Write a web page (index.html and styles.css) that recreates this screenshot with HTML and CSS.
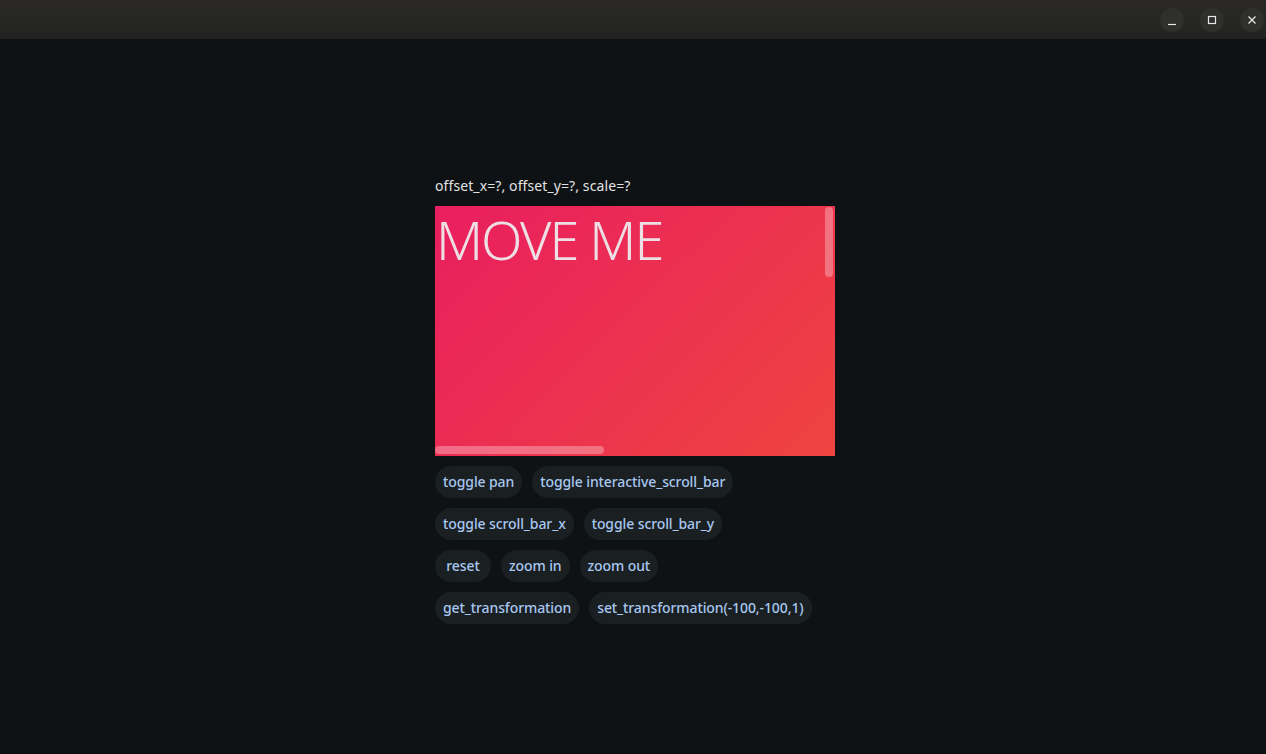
FILE: index.html
```html
<!DOCTYPE html>
<html>
<head>
<meta charset="utf-8">
<link rel="stylesheet" href="styles.css">
</head>
<body>
<div class="titlebar">
  <div class="winbtns">
    <div class="winbtn"><svg width="24" height="24" viewBox="0 0 24 24"><path d="M8 16.5h8" stroke="#e6e6e6" stroke-width="1.2" fill="none"/></svg></div>
    <div class="winbtn"><svg width="24" height="24" viewBox="0 0 24 24"><rect x="8.5" y="8.5" width="7" height="7" stroke="#e6e6e6" stroke-width="1.2" fill="none"/></svg></div>
    <div class="winbtn"><svg width="24" height="24" viewBox="0 0 24 24"><path d="M8.5 8.5l7 7M15.5 8.5l-7 7" stroke="#e6e6e6" stroke-width="1.3" fill="none"/></svg></div>
  </div>
</div>
<main class="main">
  <div class="column">
    <div class="label">offset_x=?, offset_y=?, scale=?</div>
    <div class="viewport">
      <div class="move">MOVE ME</div>
      <div class="sbar-y"></div>
      <div class="sbar-x"></div>
    </div>
    <div class="rows">
      <div class="row"><button class="btn">toggle pan</button><button class="btn">toggle interactive_scroll_bar</button></div>
      <div class="row"><button class="btn">toggle scroll_bar_x</button><button class="btn">toggle scroll_bar_y</button></div>
      <div class="row"><button class="btn">reset</button><button class="btn">zoom in</button><button class="btn">zoom out</button></div>
      <div class="row"><button class="btn">get_transformation</button><button class="btn">set_transformation(-100,-100,1)</button></div>
    </div>
  </div>
</main>
</body>
</html>
```
FILE: styles.css
```css
html, body {
  margin: 0;
  padding: 0;
  height: 100%;
}
body {
  background: #0e1215;
  font-family: "Noto Sans", "Open Sans", sans-serif;
  color: #e3e3e3;
  overflow: hidden;
}
.titlebar {
  height: 39px;
  background: linear-gradient(#2a2927, #222220);
  display: flex;
  justify-content: flex-end;
  align-items: center;
}
.winbtns {
  display: flex;
  gap: 16px;
  padding-right: 2px;
}
.winbtn {
  width: 24px;
  height: 24px;
  border-radius: 50%;
  background: #2f2f2d;
  display: flex;
  align-items: center;
  justify-content: center;
}
.winbtn svg { display: block; }
.main {
  display: flex;
  justify-content: center;
  padding-top: 136px;
}
.column {
  width: 400px;
  display: flex;
  flex-direction: column;
  margin-left: 4px;
}
.label {
  font-size: 14px;
  letter-spacing: 0.1px;
  line-height: 22px;
  height: 22px;
  margin-bottom: 9px;
  color: #e3e3e3;
}
.viewport {
  position: relative;
  width: 400px;
  height: 250px;
  background: linear-gradient(135deg, #e91e5f 0%, #ef4440 100%);
}
.move {
  font-size: 54px;
  letter-spacing: -2px;
  line-height: 66px;
  color: #eedfe5;
  padding-top: 0;
  padding-left: 1px;
  font-weight: 300;
}
.sbar-y {
  position: absolute;
  right: 2px;
  top: 1px;
  width: 8px;
  height: 70px;
  border-radius: 4px;
  background: rgba(255,255,255,0.3);
}
.sbar-x {
  position: absolute;
  left: 0;
  bottom: 2px;
  width: 169px;
  height: 8px;
  border-radius: 4px;
  background: rgba(255,255,255,0.3);
}
.rows {
  display: flex;
  flex-direction: column;
  gap: 10px;
  margin-top: 10px;
}
.row {
  display: flex;
  gap: 10px;
}
.btn {
  font-family: inherit;
  font-size: 14px;
  letter-spacing: -0.1px;
  font-weight: 500;
  height: 32px;
  min-width: 56px;
  padding: 0 8px 2px;
  border: none;
  border-radius: 16px;
  background: #1a1f22;
  color: #a8c7f0;
  text-align: center;
}
```
